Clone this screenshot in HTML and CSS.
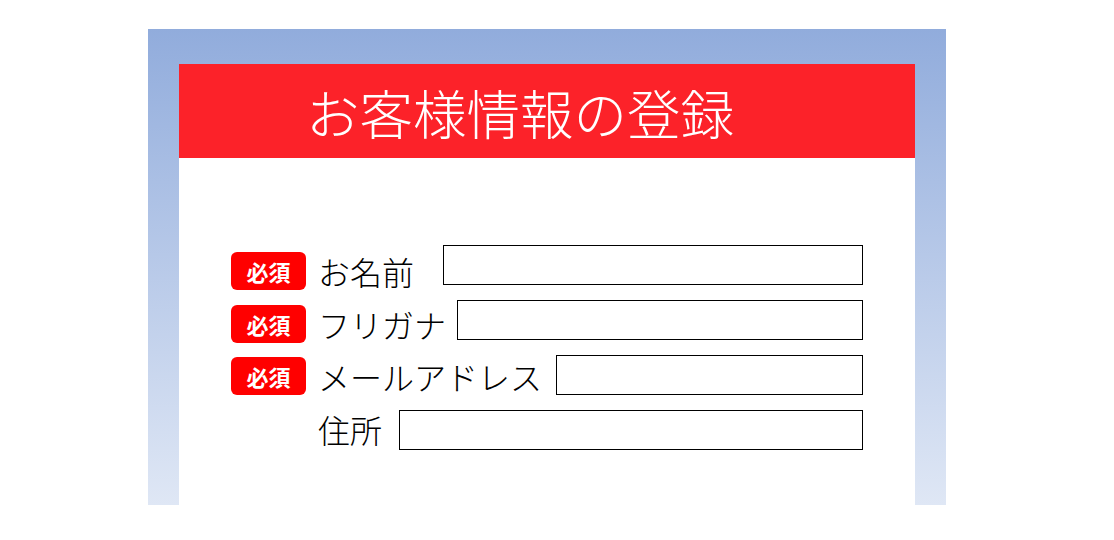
FILE: index.html
```html
<!DOCTYPE html>
<html lang="ja">
<head>
    <meta charset="UTF-8">
    <meta name="viewport" content="width=device-width, initial-scale=1.0">
    <title>お客様情報の登録</title>
    <link rel="stylesheet" href="styles.css">
</head>
<body>
    <div class="frame">
        <div class="panel">
            <h1 class="header">お客様情報の登録</h1>

            <form class="form">
                <div class="row">
                    <div class="lead">
                        <span class="badge">必須</span>
                        <label class="label label-name" for="name">お名前</label>
                    </div>
                    <input type="text" id="name" class="field">
                </div>
                <div class="row">
                    <div class="lead">
                        <span class="badge">必須</span>
                        <label class="label label-kana" for="kana">フリガナ</label>
                    </div>
                    <input type="text" id="kana" class="field">
                </div>
                <div class="row">
                    <div class="lead">
                        <span class="badge">必須</span>
                        <label class="label" for="mail">メールアドレス</label>
                    </div>
                    <input type="text" id="mail" class="field">
                </div>
                <div class="row">
                    <div class="lead">
                        <span class="badge badge-empty"></span>
                        <label class="label label-address" for="address">住所</label>
                    </div>
                    <input type="text" id="address" class="field">
                </div>
            </form>
        </div>
    </div>
</body>
</html>
```

FILE: styles.css
```css
body {
    margin: 0;
    font-family: "Noto Sans CJK JP", "Noto Sans", sans-serif;
    background: #fff;
}
.frame {
    box-sizing: border-box;
    width: 798px;
    height: 476px;
    margin: 29px 0 0 148px;
    padding: 35px 31px 0;
    background: linear-gradient(#91acdc, #dfe7f5);
}
.panel {
    height: 100%;
    background: #fff;
}
.header {
    display: flex;
    align-items: center;
    height: 94px;
    margin: 0;
    padding-left: 127px;
    background: #fc2229;
    color: #fff;
    font-size: 53.5px;
    font-weight: 300;
}
.form {
    padding: 87px 52px 0;
}
.row {
    display: flex;
    align-items: center;
    height: 40px;
    margin-bottom: 15px;
}
/* badge + label sit on a slightly tighter pitch than the inputs */
.lead {
    display: flex;
    align-items: center;
    height: 38px;
}
.row:nth-child(1) .lead { margin-top: 12px; }
.row:nth-child(2) .lead { margin-top: 7px; }
.row:nth-child(3) .lead { margin-top: 2px; }
.row:nth-child(4) .lead { margin-top: -3px; }
.badge {
    display: flex;
    align-items: center;
    justify-content: center;
    width: 75px;
    height: 38px;
    flex: none;
    border-radius: 6px;
    background: #f00;
    color: #fff;
    font-size: 22px;
    font-weight: bold;
}
.badge-empty {
    background: none;
}
.label {
    margin: 0 14px 0 12px;
    font-size: 32px;
    font-weight: 300;
    color: #000;
    white-space: nowrap;
}
.label-name {
    margin-right: 29px;
}
.label-kana {
    margin-right: 11px;
}
.label-address {
    margin-right: 17px;
}
.field {
    flex: 1;
    box-sizing: border-box;
    height: 40px;
    margin: 0;
    border: 1px solid #000;
    border-radius: 0;
    font-size: 20px;
}
```
